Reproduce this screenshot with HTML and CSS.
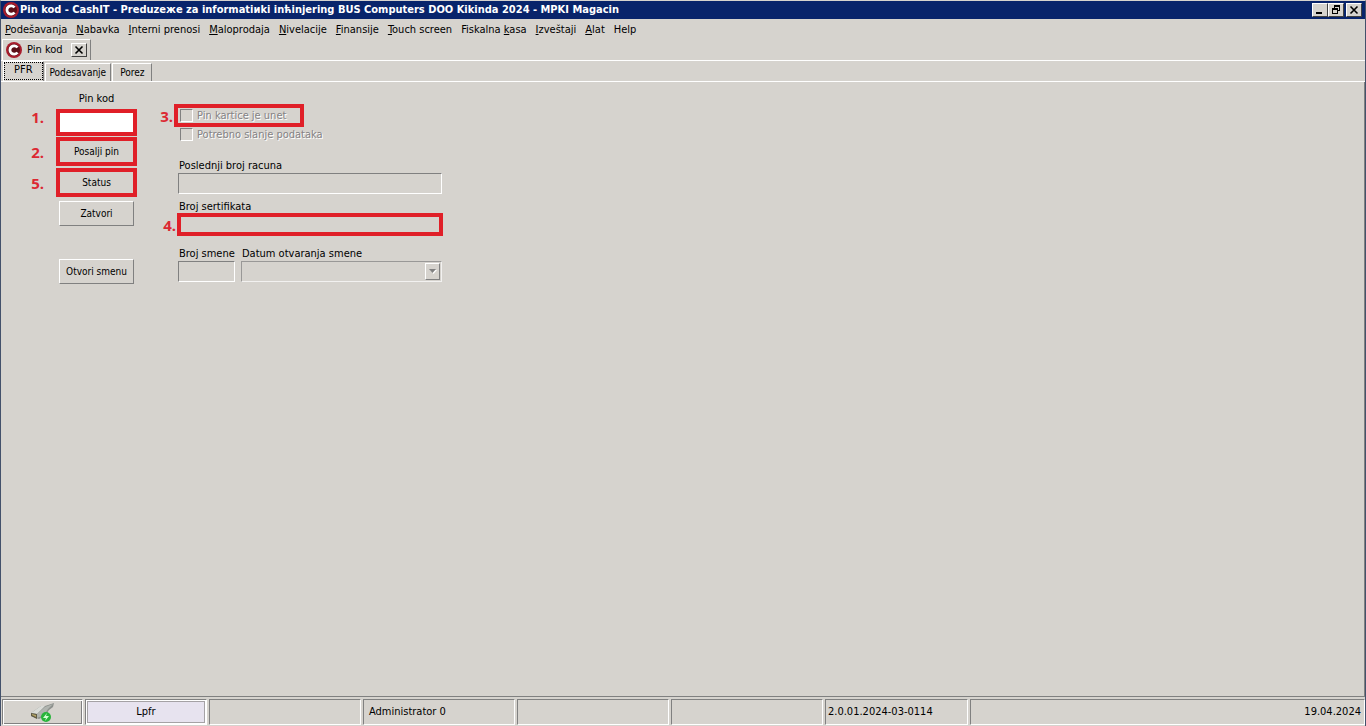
FILE: index.html
```
<!DOCTYPE html>
<html lang="sr">
<head>
    <meta charset="UTF-8">
    <meta name="viewport" content="width=device-width, initial-scale=1.0">
    <title>Pin kod - CashIT</title>
    <link rel="stylesheet" href="styles.css">
</head>
<body>
<header class="title-bar">
    <svg class="logo" viewBox="0 0 16 16">
        <circle cx="8" cy="8" r="8" fill="#a81c2c"/>
        <circle cx="8" cy="8" r="6" fill="#5c1018"/>
        <path d="M11.500 5.500A4.200 4.200 0 1 0 11.500 10.500" fill="none" stroke="#fff" stroke-width="2.800"/>
    </svg>
    <h1 class="title">Pin kod - CashIT - Preduzeжe za informatiиki inћinjering BUS Computers DOO Kikinda 2024 - MPKI Magacin</h1>
    <div class="window-buttons">
        <button class="box-button" aria-label="Minimize">
            <svg viewBox="0 0 12 10"><path d="M2 7h6v2H2z"/></svg>
        </button>
        <button class="box-button" aria-label="Restore">
            <svg viewBox="0 0 12 10"><path d="M4 0h6v6H8v3H2V3h2zM5 2v1h3v2h1V2zM3 5v3h4V5z" fill-rule="evenodd"/></svg>
        </button>
        <button class="box-button close" aria-label="Close">
            <svg viewBox="0 0 12 10"><path d="M2.5 1.5l7 7M9.5 1.5l-7 7" stroke="#000" stroke-width="1.6"/></svg>
        </button>
    </div>
</header>

<nav class="menu">
    <a href="#"><u>P</u>odešavanja</a>
    <a href="#"><u>N</u>abavka</a>
    <a href="#"><u>I</u>nterni prenosi</a>
    <a href="#"><u>M</u>aloprodaja</a>
    <a href="#"><u>N</u>ivelacije</a>
    <a href="#"><u>F</u>inansije</a>
    <a href="#"><u>T</u>ouch screen</a>
    <a href="#">Fiskalna <u>k</u>asa</a>
    <a href="#"><u>I</u>zveštaji</a>
    <a href="#"><u>A</u>lat</a>
    <a href="#">Help</a>
</nav>

<div class="window-tabs">
    <div class="window-tab">
        <svg class="logo" viewBox="0 0 16 16">
            <circle cx="8" cy="8" r="8" fill="#a81c2c"/>
            <circle cx="8" cy="8" r="6" fill="#5c1018"/>
            <path d="M11.5 5.5A4.2 4.2 0 1 0 11.5 10.5" fill="none" stroke="#fff" stroke-width="2.8"/>
        </svg>
        <span>Pin kod</span>
        <button class="box-button" aria-label="Zatvori karticu">
            <svg viewBox="0 0 12 10"><path d="M2.5 1.5l7 7M9.5 1.5l-7 7" stroke="#000" stroke-width="1.6"/></svg>
        </button>
    </div>
</div>

<div class="page-tabs">
    <button class="page-tab active">PFR</button>
    <button class="page-tab">Podesavanje</button>
    <button class="page-tab">Porez</button>
</div>

<main class="page">
    <div class="actions">
        <label class="pin-label" for="pin">Pin kod</label>
        <div class="field">
            <input class="text-box pin" id="pin" type="text">
            <div class="mark mark-pin"><span class="mark-number">1.</span></div>
        </div>
        <div class="field">
            <button class="button">Posalji pin</button>
            <div class="mark mark-button"><span class="mark-number">2.</span></div>
        </div>
        <div class="field">
            <button class="button">Status</button>
            <div class="mark mark-button"><span class="mark-number">5.</span></div>
        </div>
        <button class="button">Zatvori</button>
        <button class="button open-shift">Otvori smenu</button>
    </div>

    <div class="details">
        <div class="checks">
            <div class="field check-row">
                <input type="checkbox" id="card" disabled>
                <label for="card">Pin kartice je unet</label>
                <div class="mark mark-check"><span class="mark-number">3.</span></div>
            </div>
            <div class="check-row">
                <input type="checkbox" id="send" disabled>
                <label for="send">Potrebno slanje podataka</label>
            </div>
        </div>
        <div class="group">
            <label for="receipt">Poslednji broj racuna</label>
            <input class="text-box" id="receipt" type="text" disabled>
        </div>
        <div class="group">
            <label for="cert">Broj sertifikata</label>
            <div class="field">
                <input class="text-box" id="cert" type="text" disabled>
                <div class="mark mark-box"><span class="mark-number">4.</span></div>
            </div>
        </div>
        <div class="shift">
            <div class="group shift-number">
                <label for="shift">Broj smene</label>
                <input class="text-box" id="shift" type="text" disabled>
            </div>
            <div class="group shift-date">
                <label for="opened">Datum otvaranja smene</label>
                <div class="field">
                    <select class="text-box" id="opened" disabled><option></option></select>
                    <span class="arrow"><svg viewBox="0 0 8 5"><path d="M1 1h7L4.5 5z" fill="#fff"/><path d="M0 0h7L3.5 4z" fill="#808080"/></svg></span>
                </div>
            </div>
        </div>
    </div>
</main>

<footer class="status-bar">
    <div class="cell cell-device">
        <svg viewBox="0 0 24 20">
            <path d="M0 11L10 4l4 0 9-3-1 4-4 3-4 6-6 3-8-3z" fill="#8d918d"/>
            <path d="M0 11l10-7 4 0-8 8z" fill="#dadcd8"/>
            <path d="M6 12l8-7 8-3-5 5-4 6-7 3z" fill="#b0b4af"/>
            <path d="M0 11l6 1v5l-6-3z" fill="#5f5b45"/>
            <path d="M1 12l4 1v2l-4-2z" fill="#b5a566"/>
            <circle cx="15" cy="15" r="5" fill="#27b43a"/>
            <path d="M16 11l-4 5h3l-1 3 4-5h-3z" fill="#d6ffd6"/>
        </svg>
    </div>
    <div class="cell cell-lpfr">Lpfr</div>
    <div class="cell cell-user"></div>
    <div class="cell cell-user">Administrator 0</div>
    <div class="cell cell-user"></div>
    <div class="cell cell-user"></div>
    <div class="cell cell-version">2.0.01.2024-03-0114</div>
    <div class="cell cell-date">19.04.2024</div>
</footer>
</body>
</html>
```
FILE: styles.css
```
* {
    box-sizing: border-box;
}

body {
    display: flex;
    flex-direction: column;
    min-height: 100vh;
    margin: 0;
    border: 1px solid #43516b;
    border-top-color: #d6d3ce;
    border-bottom: none;
    background-color: #d6d3ce;
    color: #000;
    font-family: "DejaVu Sans Condensed", Tahoma, sans-serif;
    font-size: 11px;
    line-height: 14px;
}

button, input, select {
    margin: 0;
    padding: 0;
    border-radius: 0;
    background-color: #d6d3ce;
    color: #000;
    font: inherit;
}

/* Title bar */
.title-bar {
    display: flex;
    align-items: center;
    height: 18px;
    padding: 0 3px 0 2px;
    background-color: #08246b;
    color: #fff;
}

.logo {
    width: 16px;
    height: 16px;
    flex-shrink: 0;
}

.title {
    flex: 1;
    margin: 0 0 0 1px;
    font-size: 11px;
    font-weight: bold;
    white-space: nowrap;
    overflow: hidden;
}

.window-buttons {
    display: flex;
}

.box-button {
    width: 16px;
    height: 14px;
    border: 1px solid;
    border-color: #fff #404040 #404040 #fff;
    display: flex;
    align-items: center;
    justify-content: center;
}

.box-button svg {
    width: 12px;
    height: 10px;
}

.close {
    margin-left: 2px;
}

/* Menu */
.menu {
    display: flex;
    gap: 9px;
    padding: 4px 4px 2px;
}

.menu a {
    color: #000;
    text-decoration: none;
    white-space: nowrap;
}

/* Tabs */
.window-tabs {
    border-bottom: 1px solid #fff;
    padding-left: 1px;
}

.window-tab {
    display: flex;
    align-items: center;
    width: 89px;
    height: 21px;
    padding: 0 3px;
    border: 1px solid #fff;
    border-right-color: #808080;
    border-bottom: none;
}

.window-tab span {
    flex: 1;
    margin-left: 5px;
}

.page-tabs {
    display: flex;
    align-items: flex-end;
    height: 21px;
    padding-left: 2px;
    border-bottom: 1px solid #fff;
}

.page-tab {
    height: 18px;
    padding: 0 4px;
    border: 1px solid #fff;
    border-right: 1px solid #808080;
    border-bottom: none;
    font-size: 10px;
    margin-right: 1px;
}

.page-tab:last-child {
    padding: 0 7px;
}

.page-tab.active {
    height: 20px;
    padding: 0 10px 3px;
    font-size: 11px;
    outline: 1px dotted #000;
    outline-offset: -2px;
}

/* Page */
.page {
    flex: 1;
    display: flex;
    gap: 44px;
    padding: 10px 58px;
    border-bottom: 1px solid #808080;
    border-right: 1px solid #808080;
}

.actions {
    display: flex;
    flex-direction: column;
    gap: 6px;
    width: 75px;
}

.pin-label {
    text-align: center;
}

.field {
    position: relative;
}

.text-box {
    display: block;
    width: 100%;
    height: 21px;
    border: 1px solid;
    border-color: #808080 #fff #fff #808080;
    appearance: none;
}

.pin {
    padding: 0 3px;
    background-color: #fff;
}

.button {
    display: block;
    width: 100%;
    height: 25px;
    border: 1px solid;
    border-color: #fff #808080 #808080 #fff;
    font-size: 10px;
    white-space: nowrap;
}

.open-shift {
    margin-top: 27px;
}

.details {
    width: 264px;
    padding-top: 14px;
}

.checks {
    display: flex;
    flex-direction: column;
    align-items: flex-start;
    margin-bottom: 15px;
}

.check-row {
    display: flex;
    align-items: center;
    gap: 4px;
    height: 19px;
    padding-left: 2px;
    color: #848284;
    text-shadow: 1px 1px #fff;
}

.check-row input {
    width: 13px;
    height: 13px;
    border: 1px solid;
    border-color: #808080 #fff #fff #808080;
    appearance: none;
}

.group {
    display: flex;
    flex-direction: column;
    margin-bottom: 6px;
}

.group label {
    padding-left: 1px;
    white-space: nowrap;
}

.shift {
    display: flex;
    gap: 6px;
    margin-top: 12px;
}

.shift-number {
    width: 57px;
}

.shift-date {
    flex: 1;
}

.arrow {
    position: absolute;
    top: 2px;
    right: 2px;
    display: flex;
    align-items: center;
    justify-content: center;
    width: 15px;
    height: 17px;
    border: 1px solid;
    border-color: #fff #808080 #808080 #fff;
    pointer-events: none;
}

.arrow svg {
    width: 8px;
    height: 5px;
}

/* Step marks over the controls */
.mark {
    position: absolute;
    inset: -3px;
    display: flex;
    align-items: center;
    border: 4px solid #e01f28;
    pointer-events: none;
}

.mark-button {
    inset: -2px -3px;
}

.mark-check {
    inset: -2px -18px -2px -4px;
}

.mark-box {
    inset: -1px;
}

.mark-number {
    position: absolute;
    right: 100%;
    margin-right: 16px;
    color: #dc2832;
    font-family: "Open Sans", sans-serif;
    font-size: 15px;
    font-weight: bold;
    text-shadow: none;
}

.mark-pin .mark-number {
    top: -3px;
}

.details .mark-number {
    margin-right: 5px;
}

/* Status bar */
.status-bar {
    display: flex;
    gap: 2px;
    padding: 2px 0 1px 1px;
}

.cell {
    display: flex;
    align-items: center;
    height: 26px;
    padding: 0 5px;
    border: 1px solid;
    border-color: #808080 #fff #fff #808080;
    white-space: nowrap;
}

.cell-device {
    justify-content: center;
    width: 81px;
    box-shadow: inset 1px 1px #fff, inset -1px -1px #808080;
}

.cell-device svg {
    width: 24px;
    height: 20px;
}

.cell-lpfr {
    justify-content: center;
    width: 122px;
    background-color: #e7e3ef;
    box-shadow: inset 0 0 0 1px #fff, inset 0 0 0 2px #a5a2a5;
}

.cell-user {
    width: 152px;
}

.cell-version {
    width: 143px;
    padding: 0 2px;
}

.cell-date {
    flex: 1;
    justify-content: flex-end;
    padding: 0 3px;
}
```
